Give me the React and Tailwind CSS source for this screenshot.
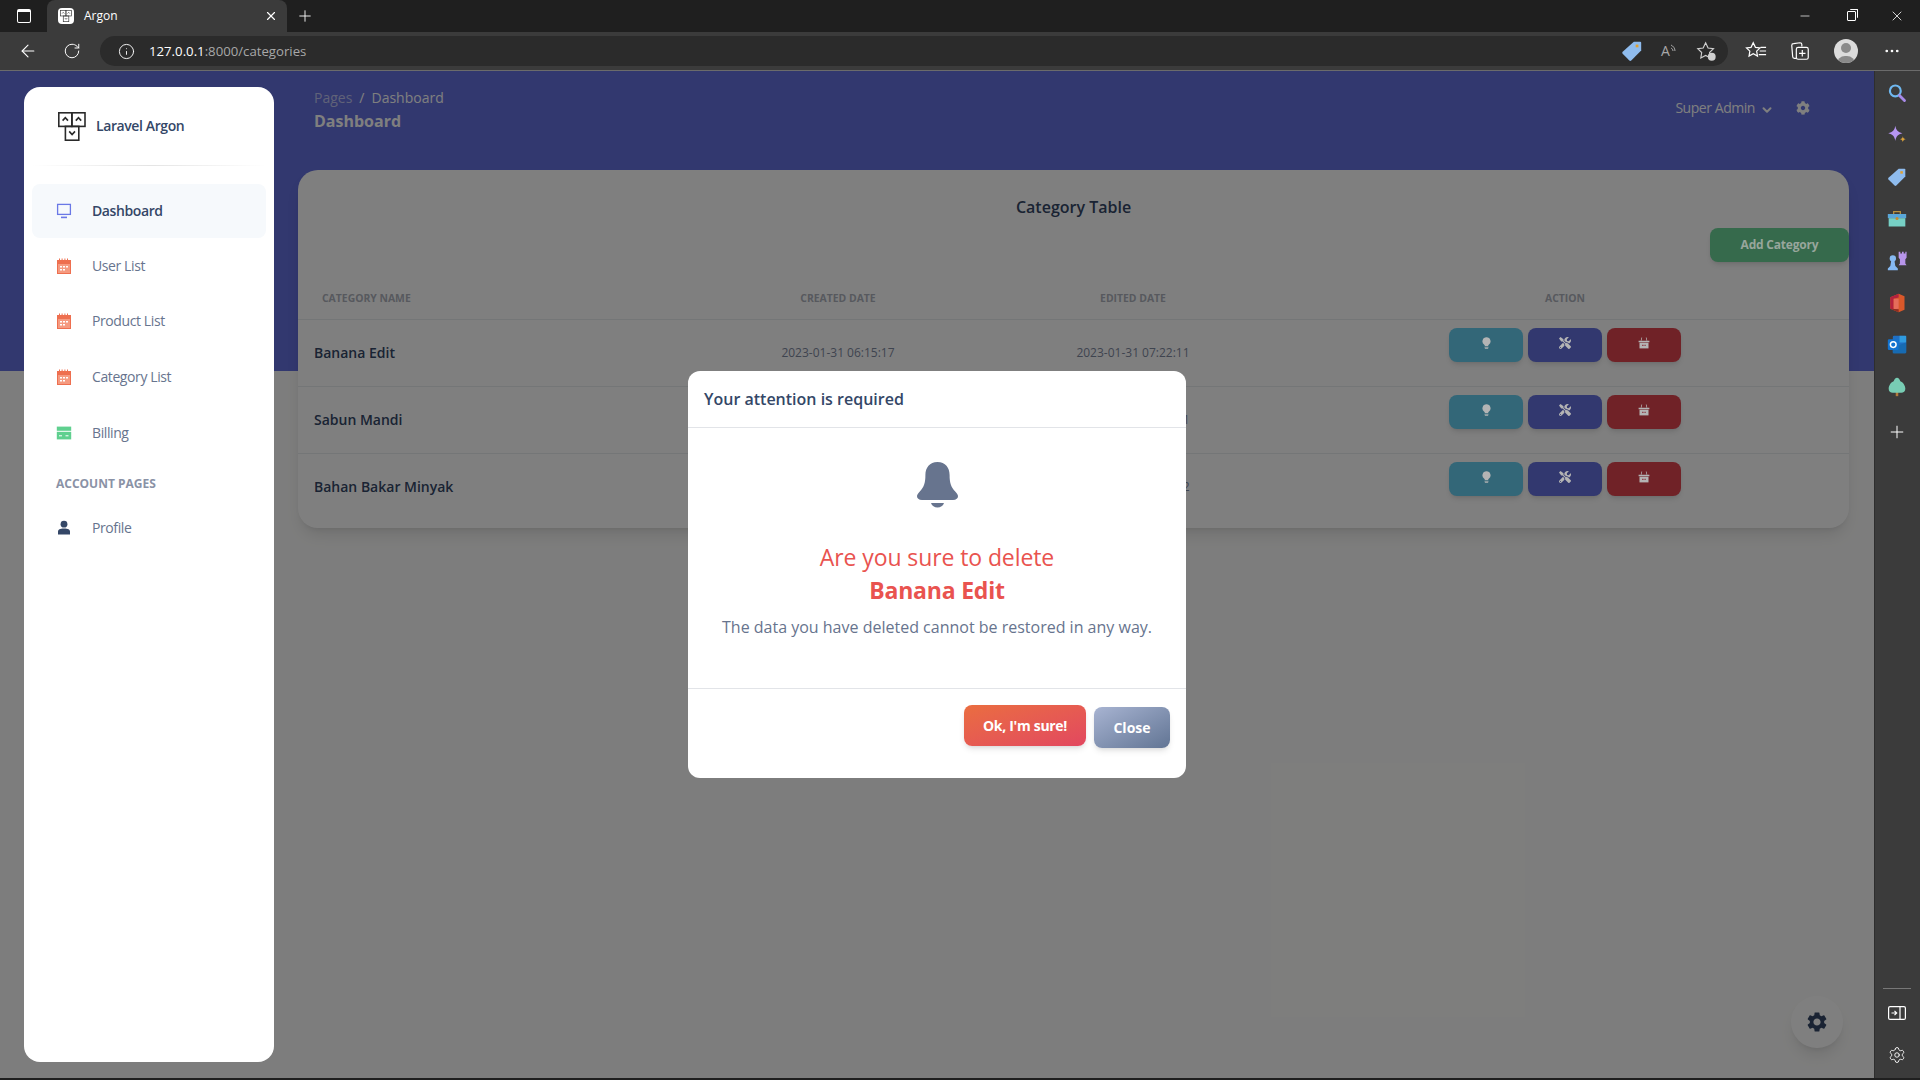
import {
  ArrowLeft,
  ChevronDown,
  Info,
  Minus,
  MoreHorizontal,
  Plus,
  RotateCw,
  Settings,
  X,
} from 'lucide-react'
import { FaCog, FaTools } from 'react-icons/fa'
import { MdSettings } from 'react-icons/md'

const font = { fontFamily: '"Open Sans", sans-serif' }

const LogoMark = ({ className }) => (
  <svg viewBox="0 0 28 29" className={className} fill="none" stroke="currentColor" strokeWidth="1.6">
    <rect x="0.8" y="0.8" width="13" height="13.6" />
    <rect x="14" y="0.8" width="13" height="13.6" />
    <rect x="7.4" y="14.4" width="13.4" height="13.8" />
    <path d="M4.6 8.6 7.3 5.6 10 8.6M17.8 8.6 20.5 5.6 23.2 8.6M11.2 19.4 14.1 22.6 17 19.4" />
  </svg>
)

const CalendarIcon = () => (
  <svg viewBox="0 0 16 16" className="h-4 w-4">
    <path d="M1 2h2V0.6h1V2h1.600V0.6h1V2h1.800V0.6h1V2h1.600V0.6h1V2H15v14H1V2Z" fill="#ee6f4f" />
    <rect x="2" y="6" width="12" height="9" fill="#f59a80" />
    <path d="M4 8h2v1.500H4V8Zm3 0h2v1.500H7V8Zm3 0h2v1.500h-2V8Zm-6 3h2v1.500H4V11Zm3 0h2v1.500H7V11Z" fill="#fff" />
  </svg>
)

const ScreenIcon = () => (
  <svg viewBox="0 0 16 16" className="h-4 w-4" fill="none" stroke="#6a78e6" strokeWidth="1.3">
    <rect x="1.6" y="1.4" width="12.8" height="10" />
    <path d="M5 14.4h6" strokeWidth="1.6" />
  </svg>
)

const CardIcon = () => (
  <svg viewBox="0 0 16 16" className="h-4 w-4">
    <rect x="0.8" y="1.6" width="14.4" height="4.2" fill="#5fd08f" />
    <rect x="0.8" y="6.8" width="14.4" height="7.6" fill="#5fd08f" />
    <path d="M3 10.8h3M9.5 10.8h3" stroke="#fff" strokeWidth="1" />
  </svg>
)

const ProfileIcon = () => (
  <svg viewBox="0 0 16 16" className="h-4 w-4" fill="#344767">
    <circle cx="8" cy="4.2" r="3.4" />
    <path d="M2 14.6v-3c0-2.2 1.8-3.2 6-3.2s6 1 6 3.2v3H2Z" />
  </svg>
)

// the action icons sit a bit brighter than the dim layer would allow, so they stay above it
const BulbIcon = () => (
  <svg viewBox="0 0 12 16" className="relative z-[11] -mt-[3px] h-[12px] w-[9px]" fill="#b4b4b4">
    <path d="M6 0.4a5.4 5.4 0 0 0-3 9.900c.5.400.8 1 .8 1.700h4.400c0-.7.3-1.300.8-1.700a5.400 5.400 0 0 0-3-9.900Z" />
    <rect x="3.400" y="13" width="5.200" height="1.200" />
    <rect x="3.800" y="14.800" width="4.400" height="1" />
  </svg>
)

const BasketIcon = () => (
  <svg viewBox="0 0 16 16" className="relative z-[11] -mt-[3px] h-3 w-3">
    <path d="M4.600 0.600 3.600 5h1l1-4.400h-1Zm6.800 0 1 4.400h-1l-1-4.400h1Z" fill="#b4b4b4" />
    <rect x="0.800" y="5" width="14.400" height="2" fill="#b4b4b4" />
    <rect x="2" y="7.600" width="12" height="7.600" fill="#b4b4b4" />
    <path d="M5.500 11.200h5" stroke="#8d3a44" strokeWidth="1.600" strokeDasharray="1.200 0.600" />
  </svg>
)

const BellIcon = () => (
  <svg viewBox="0 0 41 46" className="h-[46px] w-[41px]" fill="#67748e">
    <path d="M20.500 0C12.600 0 8.400 5.600 8.400 13c0 7.400-1.200 11.800-5.600 16.600C.8 31.700 0 33 0 34.200c0 1.900 1.700 3.800 5 3.800h31c3.300 0 5-1.900 5-3.800 0-1.200-.8-2.500-2.800-4.600-4.400-4.800-5.600-9.200-5.600-16.600C32.600 5.600 28.400 0 20.500 0Z" />
    <path d="M14 41h13c-.9 2.800-3.400 4.600-6.500 4.600S14.900 43.800 14 41Z" />
  </svg>
)

const TagIcon = ({ className = 'h-[22px] w-[22px]' }) => (
  <svg viewBox="0 0 24 24" className={className}>
    <path d="M14 2h7a1 1 0 0 1 1 1v8.500L11.200 22.300a1.500 1.500 0 0 1-2.100 0L1.800 15a1.500 1.500 0 0 1 0-2.100L14 2Z" fill="#8fbcee" />
    <rect x="16" y="5" width="3" height="3" fill="#e0a030" />
  </svg>
)

// right rail of the browser, the coloured extension buttons
const railIcons = [
  <svg key="search" viewBox="0 0 24 24" className="h-5 w-5" fill="none" strokeWidth="2.6" strokeLinecap="round">
    <circle cx="10" cy="9.500" r="6.500" stroke="#6fb8f0" />
    <path d="m15 15 6 6" stroke="#a88ae8" strokeWidth="3.400" />
  </svg>,
  <svg key="spark" viewBox="0 0 24 24" className="h-5 w-5">
    <path d="M10 1c1 5.500 3 7.600 8.500 9-5.500 1.400-7.500 3.500-8.500 9.200-1-5.700-3-7.800-8.500-9.200C7 8.600 9 6.500 10 1Z" fill="#b695f2" />
    <path d="M19 13.500c.4 2.200 1.200 3 3.500 3.500-2.300.5-3.100 1.300-3.500 3.500-.4-2.200-1.200-3-3.500-3.500 2.300-.5 3.100-1.300 3.500-3.500Z" fill="#d9a13b" />
  </svg>,
  <TagIcon key="tag" className="h-5 w-5" />,
  <svg key="box" viewBox="0 0 24 24" className="h-5 w-5">
    <path d="M8 6V3h8v3" fill="none" stroke="#b9923f" strokeWidth="1.500" />
    <rect x="1" y="6" width="22" height="5" fill="#5aa7d8" />
    <rect x="2" y="11" width="20" height="10" fill="#77d0c5" />
    <circle cx="12" cy="11.500" r="1.800" fill="#c98a2c" />
  </svg>,
  <svg key="chess" viewBox="0 0 24 24" className="h-5 w-5">
    <path d="M14 1h2v2h2V1h2v2h2V1h1.500v7l-1.500 2v5l1.500 2H14l1.500-2v-5L14 8V1Z" fill="#b795ea" />
    <circle cx="7" cy="9" r="3.800" fill="#86b9f2" />
    <path d="M5 12h4l1 6 3 3v2H1v-2l3-3 1-6Z" fill="#86b9f2" />
  </svg>,
  <svg key="office" viewBox="0 0 24 24" className="h-5 w-5">
    <path d="M14 1 4 5v14l10 4 7-3V4l-7-3Z" fill="#d9582a" />
    <path d="M14 1 4 5v14l4 .500V7l6-1.500V1Z" fill="#b3213d" />
    <path d="M8 7h6v12l-6 .500V7Z" fill="#e66d5a" />
    <path d="M14 23 4 19l10 .500V23Z" fill="#8c2d24" />
  </svg>,
  <svg key="outlook" viewBox="0 0 24 24" className="h-5 w-5">
    <rect x="7" y="1" width="16" height="21" rx="1.500" fill="#1f6fc4" />
    <rect x="15" y="1" width="8" height="8" fill="#2f9be0" />
    <path d="M7 15 23 9v12a1 1 0 0 1-1 1H7v-7Z" fill="#176bb2" />
    <rect x="1" y="5" width="13" height="13" rx="1.500" fill="#1273d0" />
    <circle cx="7.500" cy="11.500" r="3.400" fill="none" stroke="#fff" strokeWidth="1.800" />
  </svg>,
  <svg key="tree" viewBox="0 0 24 24" className="h-5 w-5">
    <rect x="10.500" y="17" width="3" height="6" fill="#b27b3c" />
    <path d="M12 1c2 0 3 2 4 4 3 1 6 5 6 9 0 3-2 5-5 5H7c-3 0-5-2-5-5 0-4 3-8 6-9 1-2 2-4 4-4Z" fill="#78cdb4" />
  </svg>,
]

const navItems = [
  { label: 'User List', icon: <CalendarIcon /> },
  { label: 'Product List', icon: <CalendarIcon /> },
  { label: 'Category List', icon: <CalendarIcon /> },
  { label: 'Billing', icon: <CardIcon /> },
]

const rows = [
  { name: 'Banana Edit', created: '2023-01-31 06:15:17', edited: '2023-01-31 07:22:11' },
  { name: 'Sabun Mandi', created: '2023-01-31 06:15:29', edited: '2023-01-31 06:15:31' },
  { name: 'Bahan Bakar Minyak', created: '2023-01-31 06:15:40', edited: '2023-01-31 06:15:42' },
]

const BrowserTop = () => (
  <header className="text-white">
    <div className="flex h-8 items-end bg-[#1f1f1f]">
      <div className="flex h-8 w-[47px] items-center justify-center">
        <span className="block h-[14px] w-[14px] rounded-[2px] border border-white border-t-[3px]" />
      </div>
      <div className="flex h-8 w-[240px] items-center rounded-t-lg bg-[#3b3b3b] pl-[11px] pr-2">
        <span className="flex h-4 w-4 items-center justify-center rounded-sm bg-white text-[#333]">
          <LogoMark className="h-3 w-3" />
        </span>
        <span className="ml-[10px] text-xs">Argon</span>
        <X size={14} className="ml-auto mr-[1px]" />
      </div>
      <div className="flex h-8 w-9 items-center justify-center">
        <Plus size={18} strokeWidth={1.2} />
      </div>
      <div className="ml-auto flex h-8 items-center">
        <span className="flex w-[46px] justify-center"><Minus size={14} strokeWidth={1.2} /></span>
        <span className="flex w-[46px] justify-center">
          <span className="relative block h-[10px] w-[9px] rounded-[1px] border border-white">
            <span className="absolute -right-[3px] -top-[3px] block h-[9px] w-[8px] rounded-[1px] border-r border-t border-white" />
          </span>
        </span>
        <span className="flex w-[46px] justify-center"><X size={16} strokeWidth={1.2} /></span>
      </div>
    </div>
    <div className="flex h-[39px] items-center border-b border-[#6b6b6b] bg-[#3b3b3b]">
      <ArrowLeft size={20} strokeWidth={1.3} className="ml-[18px]" />
      <RotateCw size={18} strokeWidth={1.3} className="ml-[25px]" />
      <div className="ml-[19px] flex h-[30px] w-[1628px] items-center rounded-full bg-[#2b2b2b] pl-[18px] pr-[11px]">
        <Info size={17} strokeWidth={1.3} />
        <span className="ml-[14px] mt-[1px] text-[13.2px]">
          127.0.0.1<span className="text-[#a8a8a8]">:8000/categories</span>
        </span>
        <div className="ml-auto flex items-center">
          <TagIcon />
          <span className="ml-[18px] flex w-5 items-start text-[14px] leading-none text-[#a8a8a8]">
            A
            <svg viewBox="0 0 8 12" className="h-3 w-2" fill="none" stroke="#a8a8a8" strokeWidth="1">
              <path d="M1 1c2 1 4 3 4 6M1 4c1 .5 2 1.500 2 3" />
            </svg>
          </span>
          <svg viewBox="0 0 24 24" className="ml-[15px] h-[21px] w-[21px]" fill="none" stroke="#d0d0d0" strokeWidth="1.3">
            <path d="m11 2 2.800 6 6.200.800-4.500 4.400 1 6.300-5.500-3-5.500 3 1-6.300L2 8.800 8.200 8 11 2Z" />
            <circle cx="18" cy="18" r="4.500" fill="#d0d0d0" stroke="none" />
          </svg>
        </div>
      </div>
      <svg viewBox="0 0 24 24" className="ml-[17px] h-[22px] w-[22px]" fill="none" stroke="#fff" strokeWidth="1.3">
        <path d="m9 3 2.400 5 5 .700-3.700 3.500.9 5.300L9 14.900l-4.600 2.600.9-5.300L1.600 8.700l5-.700L9 3ZM17 8h6M16 12h7M15 16h8" />
      </svg>
      <svg viewBox="0 0 24 24" className="ml-[22px] h-[22px] w-[22px]" fill="none" stroke="#fff" strokeWidth="1.3">
        <path d="M8 20H6a2 2 0 0 1-2-2L3 6a2 2 0 0 1 2-2l7-1c1 0 2 1 2 2v2" />
        <rect x="8" y="8" width="13" height="13" rx="2" />
        <path d="M14.500 11v7M11 14.500h7" />
      </svg>
      <span className="relative ml-[23px] block h-6 w-6 overflow-hidden rounded-full bg-[#dcdcdc]">
        <span className="absolute left-[7px] top-1 block h-[10px] w-[10px] rounded-full bg-[#8a8a8a]" />
        <span className="absolute left-[3px] top-[17px] block h-4 w-[18px] rounded-full bg-[#8a8a8a]" />
      </span>
      <MoreHorizontal size={18} strokeWidth={1.6} className="ml-[25px]" />
    </div>
  </header>
)

const Sidebar = () => (
  <aside className="relative z-20 ml-6 mb-4 mt-4 flex w-[250px] shrink-0 flex-col rounded-2xl bg-white px-2 text-sm text-[#67748e]">
    <div className="flex h-[78px] items-center pl-[26px] text-[#2a2a2a]">
      <LogoMark className="h-[29px] w-7" />
      <span className="ml-[10px] font-semibold tracking-[-0.4px] text-[#344767]">Laravel Argon</span>
    </div>
    <div className="h-px bg-gradient-to-r from-transparent via-[#e4e4e4] to-transparent" />
    <nav className="mt-[18px]">
      <div className="flex h-[54px] items-center rounded-lg bg-[#f6f9fc] pl-6 font-semibold text-[#344767]">
        <ScreenIcon />
        <span className="ml-5 tracking-[-0.4px]">Dashboard</span>
      </div>
      <div className="mt-[0.5px] flex flex-col gap-[1.75px]">
        {navItems.map((item) => (
          <div key={item.label} className="flex h-[54px] items-center pl-6">
            {item.icon}
            <span className="ml-5 tracking-[-0.4px]">{item.label}</span>
          </div>
        ))}
      </div>
      <p className="mt-[16px] pl-6 text-xs font-bold uppercase leading-4 text-[#8a92a6]">Account Pages</p>
      <div className="mt-[9px] flex h-[54px] items-center pl-6">
        <ProfileIcon />
        <span className="ml-5 tracking-[-0.4px]">Profile</span>
      </div>
    </nav>
  </aside>
)

const CategoryTable = () => (
  <section className="h-[358px] rounded-[20px] bg-white shadow-lg">
    <h2 className="pt-[26px] text-center text-base font-semibold leading-[22px] text-[#344767]">Category Table</h2>
    <div className="mt-[10px] flex justify-end">
      <button className="h-[34px] w-[139px] rounded-lg bg-[#6cd498] text-xs font-bold shadow-md">
        <span className="relative z-[11] tracking-[-0.2px] text-[#98a69c]">Add Category</span>
      </button>
    </div>
    <table className="mt-[15px] w-full table-fixed border-collapse text-left">
      <thead>
        <tr className="h-[42px] border-b border-[#e9ecef] text-[10.4px] font-bold uppercase text-[#aeb2bc]">
          <th className="w-[410px] pl-[24px] pt-[2px] align-middle font-bold">Category Name</th>
          <th className="w-[260px] pt-[2px] text-center font-bold">Created Date</th>
          <th className="w-[330px] pt-[2px] text-center font-bold">Edited Date</th>
          <th className="pr-[17px] pt-[2px] text-center font-bold">Action</th>
        </tr>
      </thead>
      <tbody>
        {rows.map((row, i) => (
          <tr key={row.name} className={i < 2 ? 'h-[67px] border-b border-[#e9ecef]' : 'h-[67px]'}>
            <td className="pl-4 text-sm font-semibold text-[#344767]">{row.name}</td>
            <td className="pt-[1px] text-center text-xs text-[#7f899f]">{row.created}</td>
            <td className="pt-[1px] text-center text-xs text-[#7f899f]">{row.edited}</td>
            <td className="pr-[17px] pt-2 align-top">
              <div className="flex justify-center gap-[5px]">
                <button className="flex h-[34px] w-[74px] items-center justify-center rounded-lg bg-[#66cef0] shadow-md"><BulbIcon /></button>
                <button className="flex h-[34px] w-[74px] items-center justify-center rounded-lg bg-[#6470de] shadow-md">
                  <FaTools size={12} className="relative z-[11] -mt-[3px] text-[#b4b4b4]" />
                </button>
                <button className="flex h-[34px] w-[74px] items-center justify-center rounded-lg bg-[#e0444f] shadow-md"><BasketIcon /></button>
              </div>
            </td>
          </tr>
        ))}
      </tbody>
    </table>
  </section>
)

const ConfirmModal = () => (
  <div className="absolute left-[688px] top-[300px] z-30 w-[498px] rounded-xl bg-white">
    <div className="flex h-[57px] items-center border-b border-[#e2e4e8] px-4 text-base font-semibold text-[#344767]">
      Your attention is required
    </div>
    <div className="h-[261px] border-b border-[#e2e4e8] pt-[34px] text-center">
      <div className="flex justify-center"><BellIcon /></div>
      <p className="mt-[33px] text-[23px] font-medium leading-[33px] tracking-[-0.1px] text-[#e9534f]">Are you sure to delete</p>
      <p className="text-[23px] font-bold leading-[33px] tracking-[-0.2px] text-[#e9534f]">Banana Edit</p>
      <p className="mt-2 text-base leading-6 text-[#67748e]">The data you have deleted cannot be restored in any way.</p>
    </div>
    <div className="flex h-[89px] items-start justify-end gap-2 pr-4 pt-4">
      <button className="h-[41px] w-[122px] rounded-lg bg-gradient-to-br from-[#ea6d3f] to-[#e2475f] text-sm font-bold tracking-[-0.3px] text-white shadow-md">Ok, I'm sure!</button>
      <button className="mt-[2px] h-[41px] w-[76px] rounded-lg bg-gradient-to-br from-[#a8b4d2] to-[#627594] text-sm font-bold text-white shadow-md">Close</button>
    </div>
  </div>
)

const BrowserRail = () => (
  <aside className="flex w-[46px] shrink-0 flex-col items-center border-l border-[#2e2e2e] bg-[#3b3b3b] pb-[14px] pr-[2px] pt-3 text-white">
    <div className="flex flex-col items-center gap-[22px]">
      {railIcons}
      <Plus size={20} strokeWidth={1.2} className="mt-[3px]" />
    </div>
    <div className="mt-auto flex flex-col items-center">
      <div className="mb-[17px] h-px w-7 bg-[#777]" />
      <svg viewBox="0 0 18 14" className="h-[14px] w-[18px]" fill="none" stroke="#fff" strokeWidth="1.2">
        <rect x="0.6" y="0.6" width="16.8" height="12.8" rx="1.5" />
        <path d="M12 0.6v12.800M3.500 7h5M6.500 4.800 8.700 7l-2.200 2.200" />
      </svg>
      <Settings size={18} strokeWidth={1.2} className="mt-[26px]" />
    </div>
  </aside>
)

export default function App() {
  return (
    <div className="flex h-screen flex-col overflow-hidden bg-[#1f1f1f] pb-[2px]" style={font}>
      <BrowserTop />
      <div className="flex min-h-0 flex-1">
        <div className="relative flex min-w-0 flex-1 bg-[#fbfbfa]">
          <div className="absolute inset-x-0 top-0 h-[300px] bg-[#6470de]" />
          <Sidebar />
          <main className="relative min-w-0 flex-1 pl-6 pr-[25px]">
            <div className="flex h-[99px] items-start pl-4 pt-[17px]">
              <div className="text-white">
                <p className="text-sm leading-5"><span className="text-white/60">Pages</span><span className="mx-[7px]">/</span>Dashboard</p>
                <p className="mt-[2px] text-base font-bold leading-[22px]">Dashboard</p>
              </div>
              <div className="ml-auto flex items-center pr-[39px] pt-[10px] text-sm text-white">
                <span className="tracking-[-0.45px]">Super Admin</span>
                <ChevronDown size={14} strokeWidth={3.4} className="ml-[5px] mt-[3px]" />
                <FaCog size={14} className="ml-[22px]" />
              </div>
            </div>
            <CategoryTable />
          </main>
          <button className="absolute bottom-[30px] right-[31px] flex h-[52px] w-[52px] items-center justify-center rounded-full bg-white shadow-lg">
            <MdSettings size={24} className="text-[#344767]" />
          </button>
          <div className="absolute inset-0 z-10 bg-black/50" />
          <ConfirmModal />
        </div>
        <BrowserRail />
      </div>
    </div>
  )
}
